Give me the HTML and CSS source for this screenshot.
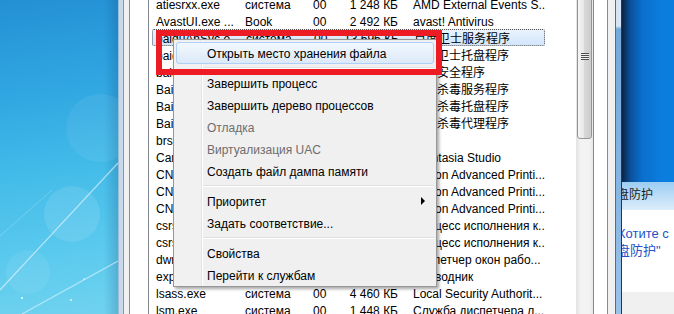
FILE: index.html
```html
<!DOCTYPE html>
<html lang="ru">
<head>
    <meta charset="UTF-8">
    <title>Диспетчер задач Windows</title>
    <link rel="stylesheet" href="styles.css">
</head>
<body>
    <!-- Desktop wallpaper on the left -->
    <div class="desktop">
        <svg width="118" height="314" viewBox="0 0 118 314">
            <circle cx="72" cy="214" r="28" fill="#fff" opacity="0.10"/>
            <circle cx="100" cy="128" r="34" fill="#fff" opacity="0.06"/>
            <circle cx="28" cy="272" r="22" fill="#fff" opacity="0.07"/>
            <line x1="0" y1="290" x2="118" y2="163" stroke="#fff" stroke-width="1.2" opacity="0.55"/>
            <line x1="22" y1="314" x2="118" y2="261" stroke="#fff" stroke-width="1.2" opacity="0.5"/>
            <line x1="0" y1="236" x2="52" y2="190" stroke="#fff" stroke-width="0.8" opacity="0.25"/>
            <circle cx="22" cy="298" r="1" fill="#fff"/>
            <circle cx="71" cy="300" r="1" fill="#fff" opacity="0.8"/>
            <circle cx="84" cy="279" r="0.8" fill="#fff" opacity="0.8"/>
        </svg>
    </div>

    <div class="frame-left"></div>

    <!-- Task manager client area -->
    <div class="client">
        <div class="tab-page">
            <div class="listview">
                <div class="rows">
                    <div class="row"><span class="c-name">atiesrxx.exe</span><span class="c-user">система</span><span class="c-cpu">00</span><span class="c-mem">1 248 КБ</span><span class="c-desc">AMD External Events S...</span></div>
                    <div class="row"><span class="c-name">AvastUI.exe ...</span><span class="c-user">Book</span><span class="c-cpu">00</span><span class="c-mem">2 492 КБ</span><span class="c-desc">avast! Antivirus</span></div>
                    <div class="row sel"><span class="c-name">baiduAnSvc.e...</span><span class="c-user">система</span><span class="c-cpu">00</span><span class="c-mem">13 696 КБ</span><span class="c-desc">百度卫士服务程序</span></div>
                    <div class="row"><span class="c-name">baiduSafeTr...</span><span class="c-user">Book</span><span class="c-cpu">00</span><span class="c-mem">9 880 КБ</span><span class="c-desc">百度卫士托盘程序</span></div>
                    <div class="row"><span class="c-name">baiduHips.exe</span><span class="c-user">система</span><span class="c-cpu">00</span><span class="c-mem">3 104 КБ</span><span class="c-desc">百度安全程序</span></div>
                    <div class="row"><span class="c-name">BaiduSdSvc.exe</span><span class="c-user">система</span><span class="c-cpu">00</span><span class="c-mem">21 520 КБ</span><span class="c-desc">百度杀毒服务程序</span></div>
                    <div class="row"><span class="c-name">BaiduSdTray...</span><span class="c-user">Book</span><span class="c-cpu">00</span><span class="c-mem">12 332 КБ</span><span class="c-desc">百度杀毒托盘程序</span></div>
                    <div class="row"><span class="c-name">BaiduSdLPro...</span><span class="c-user">система</span><span class="c-cpu">00</span><span class="c-mem">2 184 КБ</span><span class="c-desc">百度杀毒代理程序</span></div>
                    <div class="row"><span class="c-name">brs.exe</span><span class="c-user">система</span><span class="c-cpu">00</span><span class="c-mem">1 096 КБ</span><span class="c-desc"></span></div>
                    <div class="row"><span class="c-name">CamtasiaStu...</span><span class="c-user">Book</span><span class="c-cpu">00</span><span class="c-mem">48 712 КБ</span><span class="c-desc">Camtasia Studio</span></div>
                    <div class="row"><span class="c-name">CNAB4RPK.EXE</span><span class="c-user">Book</span><span class="c-cpu">00</span><span class="c-mem">1 024 КБ</span><span class="c-desc">Canon Advanced Printi...</span></div>
                    <div class="row"><span class="c-name">CNAB4RPK.EXE</span><span class="c-user">Book</span><span class="c-cpu">00</span><span class="c-mem">1 020 КБ</span><span class="c-desc">Canon Advanced Printi...</span></div>
                    <div class="row"><span class="c-name">CNAB4RPK.EXE</span><span class="c-user">Book</span><span class="c-cpu">00</span><span class="c-mem">1 016 КБ</span><span class="c-desc">Canon Advanced Printi...</span></div>
                    <div class="row"><span class="c-name">csrss.exe</span><span class="c-user">система</span><span class="c-cpu">00</span><span class="c-mem">1 860 КБ</span><span class="c-desc">Процесс исполнения к...</span></div>
                    <div class="row"><span class="c-name">csrss.exe</span><span class="c-user">система</span><span class="c-cpu">00</span><span class="c-mem">9 412 КБ</span><span class="c-desc">Процесс исполнения к...</span></div>
                    <div class="row"><span class="c-name">dwm.exe</span><span class="c-user">Book</span><span class="c-cpu">00</span><span class="c-mem">1 376 КБ</span><span class="c-desc">Диспетчер окон рабо...</span></div>
                    <div class="row"><span class="c-name">explorer.exe</span><span class="c-user">Book</span><span class="c-cpu">00</span><span class="c-mem">38 948 КБ</span><span class="c-desc">Проводник</span></div>
                    <div class="row"><span class="c-name">lsass.exe</span><span class="c-user">система</span><span class="c-cpu">00</span><span class="c-mem">4 460 КБ</span><span class="c-desc">Local Security Authorit...</span></div>
                    <div class="row"><span class="c-name">lsm.exe</span><span class="c-user">система</span><span class="c-cpu">00</span><span class="c-mem">1 448 КБ</span><span class="c-desc">Служба диспетчера л...</span></div>
                </div>
                <div class="scrollbar">
                    <div class="thumb"><span class="grip"></span></div>
                </div>
            </div>
        </div>
    </div>

    <div class="frame-right"></div>

    <!-- Part of another window peeking out on the right -->
    <div class="popup">
        <div class="pop-head"></div>
        <div class="pop-band"><span class="clip">盘防护</span></div>
        <div class="pop-body">
            <div class="clip">Хотите с</div>
            <div class="clip">盘防护"</div>
        </div>
        <div class="pop-foot"></div>
    </div>

    <!-- Context menu over the process list -->
    <div class="menu">
        <div class="item hot">Открыть место хранения файла</div>
        <div class="sep"></div>
        <div class="item">Завершить процесс</div>
        <div class="item">Завершить дерево процессов</div>
        <div class="item off">Отладка</div>
        <div class="item off">Виртуализация UAC</div>
        <div class="item">Создать файл дампа памяти</div>
        <div class="sep"></div>
        <div class="item sub">Приоритет</div>
        <div class="item">Задать соответствие...</div>
        <div class="sep"></div>
        <div class="item">Свойства</div>
        <div class="item">Перейти к службам</div>
    </div>

    <!-- Red highlight drawn over the first menu item -->
    <div class="callout"></div>
</body>
</html>
```

FILE: styles.css
```css
/* Basic reset */
* {
    box-sizing: border-box;
    margin: 0;
    padding: 0;
}

body {
    width: 674px;
    height: 314px;
    overflow: hidden;
    display: flex;
    font-family: "Liberation Sans", Arial, "Noto Sans CJK SC", sans-serif;
    font-size: 12px;
    color: #000;
    background: #f0f0f0;
}

/* Desktop wallpaper */
.desktop {
    width: 118px;
    flex: none;
    background:
        linear-gradient(to right, rgba(0, 40, 90, 0) 88%, rgba(0, 40, 90, 0.18)),
        linear-gradient(172deg, #2390d4 0%, #31a7e2 30%, #44bce9 55%, #5ccaee 80%, #70d3ef 100%);
}

.desktop svg {
    display: block;
}

/* Glass window frames */
.frame-left {
    width: 6px;
    flex: none;
    background: linear-gradient(to right, #9fbcd6 0 1px, #c6d8e9 1px 5px, #8797a8 5px);
}

.frame-right {
    width: 7px;
    flex: none;
    background:
        linear-gradient(to right, #4a6f98 0 1px, transparent 1px 6px, #19385a 6px),
        linear-gradient(#d6e5f3 0 26px, #74a9dc 29px, #86b6e3 60%, #9ac3ea);
}

/* Task manager client */
.client {
    width: 491px;
    flex: none;
    display: flex;
    padding: 0 7px 0 5px;
    background: #f0f0f0;
}

.tab-page {
    flex: 1;
    display: flex;
    padding: 0 13px 0 18px;
    background: #fff;
    border-left: 1px solid #898c95;
    border-right: 1px solid #898c95;
}

.listview {
    flex: 1;
    display: flex;
    background: #fff;
    border-left: 1px solid #828790;
    border-right: 1px solid #828790;
}

.rows {
    flex: 1;
    overflow: hidden;
    padding-left: 3px;
    margin-top: -5px;
}

.row {
    display: flex;
    width: 393px;
    height: 17px;
    white-space: nowrap;
}

.row span {
    flex: none;
    overflow: hidden;
    padding-top: 3px;
    line-height: 14px;
}

.c-name {
    width: 87px;
    padding-left: 4px;
}

.c-user {
    width: 64px;
    padding-left: 6px;
}

.c-cpu {
    width: 37px;
    padding-left: 10px;
}

.c-mem {
    width: 67px;
    padding-right: 9px;
    text-align: right;
}

.c-desc {
    width: 138px;
    padding-left: 6px;
}

.row.sel {
    background: linear-gradient(#eaf3fd, #d2e5fb);
    border: 1px dotted #555;
    border-radius: 2px;
}

.row.sel span {
    padding-top: 2px;
}

.row.sel .c-name {
    padding-left: 3px;
}

/* Vertical scrollbar */
.scrollbar {
    width: 17px;
    flex: none;
    display: flex;
    flex-direction: column;
    background: linear-gradient(to right, #e2e2e2, #f3f3f3 25%, #f3f3f3 75%, #e9e9e9);
}

.thumb {
    height: 166px;
    margin: -27px 1px 0;
    border: 1px solid #959595;
    border-radius: 3px;
    background: linear-gradient(to right, #f5f5f5, #e6e6e6 50%, #d8d8d8 50%, #cdcdcd);
    display: flex;
    align-items: center;
    justify-content: center;
}

.grip {
    width: 8px;
    height: 7px;
    background: repeating-linear-gradient(#4f4f4f 0 1px, #f0f0f0 1px 2px);
}

/* Window on the right */
.popup {
    flex: 1;
    display: flex;
    flex-direction: column;
    overflow: hidden;
    white-space: nowrap;
}

.pop-head {
    height: 182px;
    flex: none;
    background: linear-gradient(to right, #0a2344, #0a4f98 8px, #0a6fcc 20px, #0b7ddf 40px);
}

.pop-band {
    height: 28px;
    flex: none;
    padding-top: 6px;
    line-height: 14px;
    color: #1a1a1a;
    background: linear-gradient(#9ccdf3, #dcedfb);
}

.pop-body {
    height: 82px;
    flex: none;
    padding-top: 15px;
    font-size: 13px;
    line-height: 17px;
    color: #2452c9;
    background: #fff;
}

.pop-foot {
    flex: 1;
    background: #f0f0f0;
}

.clip {
    display: block;
    margin-left: -5px;
}

/* Context menu */
.menu {
    position: absolute;
    left: 173px;
    top: 39px;
    width: 264px;
    padding: 2px 2px 0;
    border: 1px solid #979797;
    background: linear-gradient(to right, #f1f1f1 0 27px, #e2e3e3 27px 28px, #fff 28px 29px, #f0f0f0 29px);
    box-shadow: 2px 2px 3px rgba(0, 0, 0, 0.35);
}

.item {
    position: relative;
    height: 22px;
    padding: 2px 0 0 30px;
    line-height: 18px;
    border: 1px solid transparent;
    border-radius: 3px;
    white-space: nowrap;
}

.item.hot {
    border-color: #aecff7;
    background: linear-gradient(#f2f8fe, #dde9f8);
}

.item.off {
    color: #6d6d6d;
}

.item.sub::after {
    content: "";
    position: absolute;
    right: 8px;
    top: 6px;
    border-left: 4px solid #000;
    border-top: 4px solid transparent;
    border-bottom: 4px solid transparent;
}

.sep {
    height: 8px;
    margin-left: 27px;
    background: linear-gradient(transparent 3px, #e0e0e0 3px 4px, #fff 4px 5px, transparent 5px);
}

/* Red annotation frame */
.callout {
    position: absolute;
    left: 156px;
    top: 30px;
    width: 286px;
    height: 45px;
    border: 6px solid #ed1c24;
}
```
